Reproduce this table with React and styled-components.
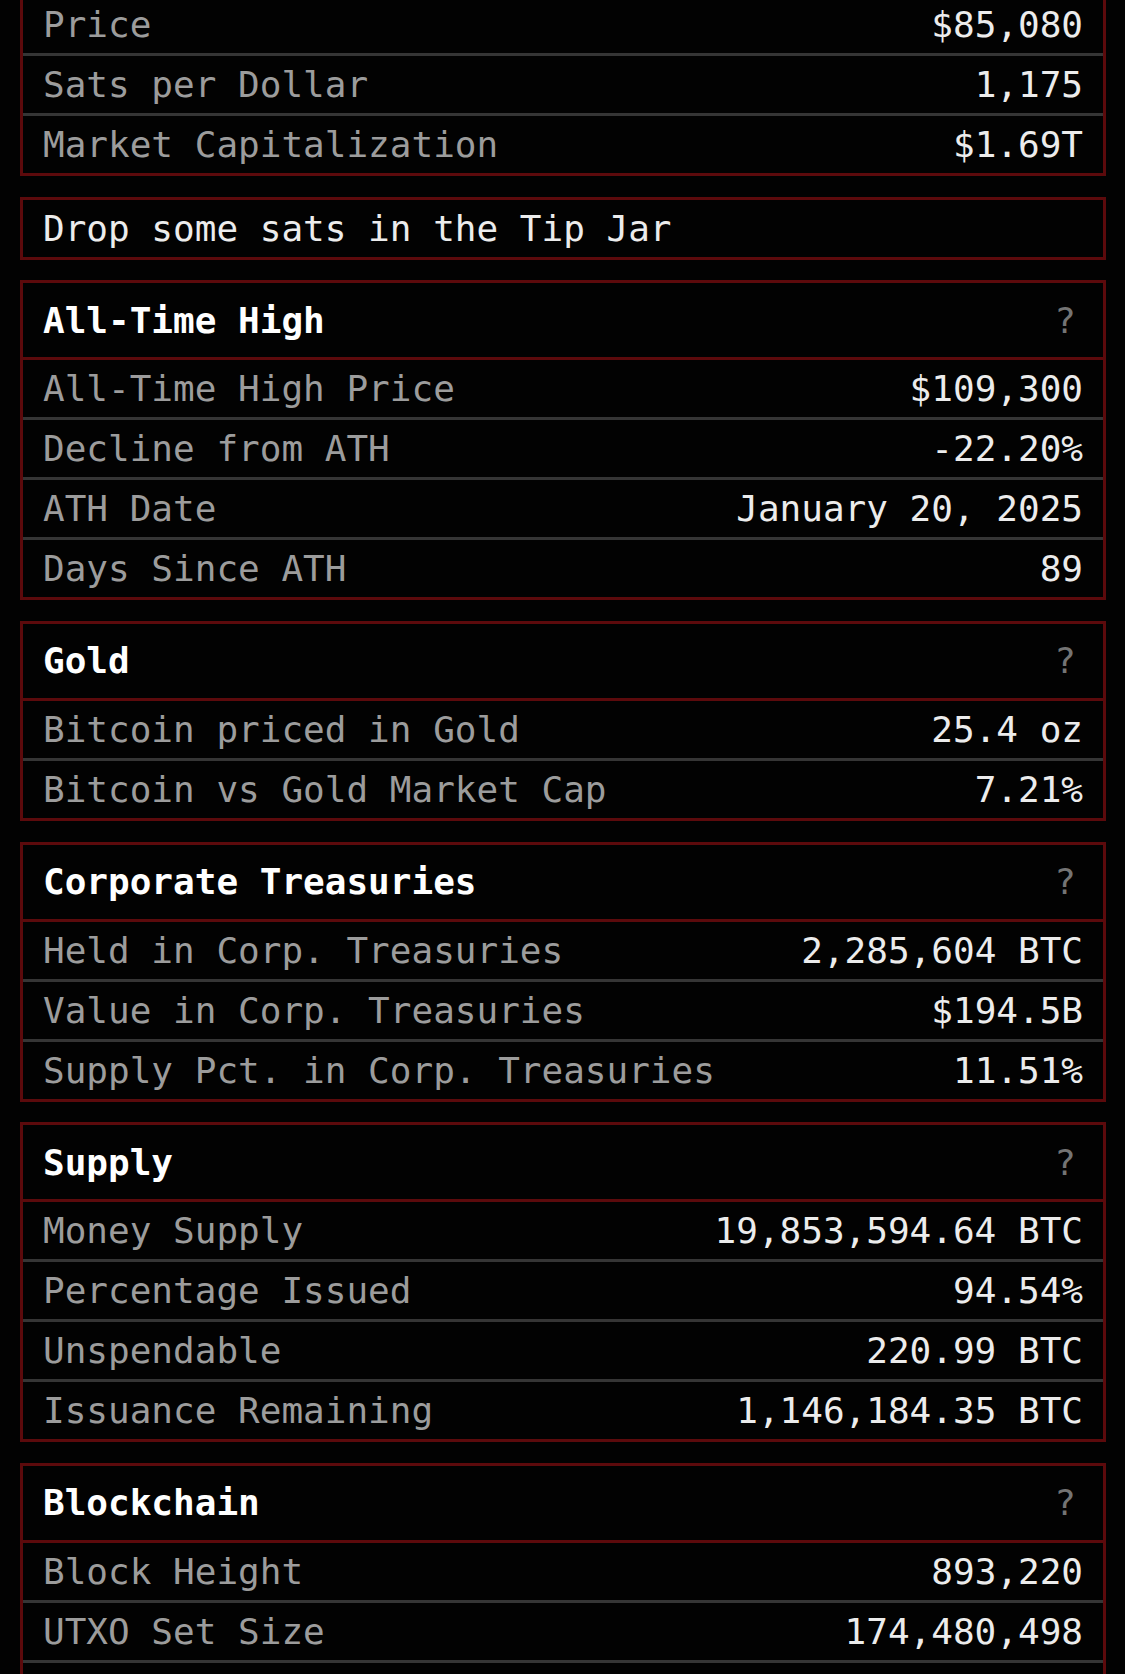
import React from 'react';
import styled, { createGlobalStyle } from 'styled-components';

const COLORS = {
	bg: '#020202',
	frame: '#5c0a0c',
	divider: '#353535',
	label: '#9c9c9c',
	value: '#ececec',
	title: '#ffffff',
	hint: '#747474',
};

const sections = [
	{
		title: 'All-Time High',
		rows: [
			['All-Time High Price', '$109,300'],
			['Decline from ATH', '-22.20%'],
			['ATH Date', 'January 20, 2025'],
			['Days Since ATH', '89'],
		],
	},
	{
		title: 'Gold',
		rows: [
			['Bitcoin priced in Gold', '25.4 oz'],
			['Bitcoin vs Gold Market Cap', '7.21%'],
		],
	},
	{
		title: 'Corporate Treasuries',
		rows: [
			['Held in Corp. Treasuries', '2,285,604 BTC'],
			['Value in Corp. Treasuries', '$194.5B'],
			['Supply Pct. in Corp. Treasuries', '11.51%'],
		],
	},
	{
		title: 'Supply',
		rows: [
			['Money Supply', '19,853,594.64 BTC'],
			['Percentage Issued', '94.54%'],
			['Unspendable', '220.99 BTC'],
			['Issuance Remaining', '1,146,184.35 BTC'],
		],
	},
	{
		title: 'Blockchain',
		rows: [
			['Block Height', '893,220'],
			['UTXO Set Size', '174,480,498'],
			['', ''],
		],
	},
];

const market = [
	['Price', '$85,080'],
	['Sats per Dollar', '1,175'],
	['Market Capitalization', '$1.69T'],
];

const App = () => (
	<>
		<GlobalStyle />
		<Page>
			<Panel lead>
				{market.map(([label, value]) => (
					<Row key={label}>
						<Label>{label}</Label>
						<Value>{value}</Value>
					</Row>
				))}
			</Panel>
			<Panel>
				<TipJar>Drop some sats in the Tip Jar</TipJar>
			</Panel>
			{sections.map(section => (
				<Panel key={section.title}>
					<Header>
						<Title>{section.title}</Title>
						<Hint>?</Hint>
					</Header>
					{section.rows.map(([label, value], i) => (
						<Row key={label || i}>
							<Label>{label}</Label>
							<Value>{value}</Value>
						</Row>
					))}
				</Panel>
			))}
		</Page>
	</>
);

export default App;

const GlobalStyle = createGlobalStyle`
    html, body {
        margin: 0;
        padding: 0;
        background: ${COLORS.bg};
        overflow: hidden;
    }
    body {
        font-family: "DejaVu Sans Mono", "Liberation Mono", monospace;
        font-size: 36px;
    }
`;

const Page = styled.div`
    display: flex;
    flex-direction: column;
    gap: 20.67px;
    padding: 0 19px 0 20px;
    background: ${COLORS.bg};
`;

const Panel = styled.section`
    border: 3px solid ${COLORS.frame};
    margin-top: ${props => (props.lead ? '-7px' : '0')};
`;

const Header = styled.div`
    height: 74px;
    display: flex;
    align-items: center;
    justify-content: space-between;
    padding: 0 27px 0 20px;
    border-bottom: 3px solid ${COLORS.frame};
`;

const Title = styled.h2`
    margin: 0;
    font-size: 36px;
    font-weight: bold;
    color: ${COLORS.title};
`;

const Hint = styled.span`
    color: ${COLORS.hint};
`;

const Row = styled.div`
    height: 57px;
    display: flex;
    align-items: center;
    justify-content: space-between;
    padding: 0 20px;
    border-bottom: 3px solid ${COLORS.divider};
    &:last-child {
        border-bottom: none;
    }
`;

const Label = styled.span`
    color: ${COLORS.label};
    white-space: nowrap;
`;

const Value = styled.span`
    color: ${COLORS.value};
    white-space: nowrap;
`;

const TipJar = styled.div`
    height: 57px;
    display: flex;
    align-items: center;
    padding: 0 20px;
    color: ${COLORS.value};
`;
